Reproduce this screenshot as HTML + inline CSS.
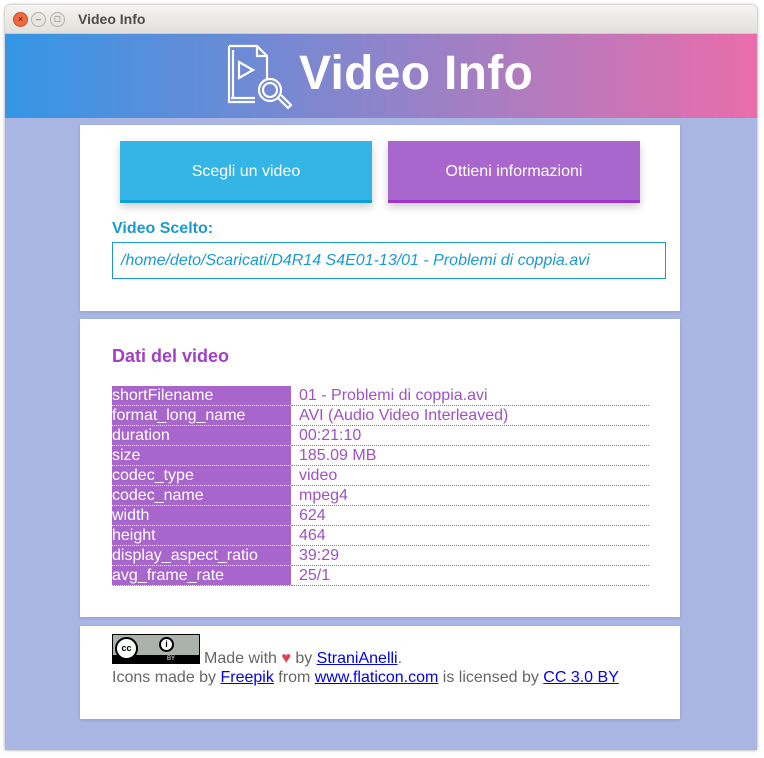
<!DOCTYPE html>
<html><head><style>
body{margin:0;width:764px;height:758px;background:#fff;font-family:"Liberation Sans",sans-serif;position:relative;overflow:hidden}
.win{position:absolute;left:5px;top:5px;width:752px;height:745px;box-shadow:0 0 3px rgba(0,0,0,.4);border-radius:5px 5px 0 0;overflow:hidden;background:#a9b5e3}
.tb{height:28px;background:linear-gradient(#f5f4f2,#e3e0dc);position:relative;border-bottom:1px solid #cfcac4}
.tb .t{position:absolute;left:73px;top:6px;font-weight:bold;font-size:14px;color:#4c4c4c}
.bt{position:absolute;top:7px;width:13px;height:13px;border-radius:50%;border:1px solid #b5b0aa;background:#e8e6e3;font-size:9px;line-height:13px;text-align:center;color:#555}
.hdr{height:84px;background:linear-gradient(90deg,#3496e6,#8e84cb 50%,#ea6dab);position:relative}
.hdr .ti{position:absolute;left:294px;top:12px;color:#fff;font-weight:bold;font-size:48px;letter-spacing:0.3px}
.card{position:absolute;left:75px;width:600px;background:#fff;box-shadow:0 1px 3px rgba(0,0,0,.15)}
.btn{position:absolute;top:16px;width:252px;height:62px;color:#fff;font-size:16px;text-align:center;line-height:62px;box-shadow:0 4px 8px rgba(0,0,0,.2);box-sizing:border-box}
table{border-collapse:collapse;position:absolute;left:32px;top:67px;width:537px;font-size:16px}
td{height:19px;padding:0;line-height:19px;border-bottom:1px dotted #a866cc;white-space:nowrap}
td.k{background:#a866cc;color:#fff;width:179px;border-bottom:1px dotted #fff}
td.v{color:#a050c8;padding-left:8px}
a{color:#00e;text-decoration:underline}
</style></head><body>
<div class="win">
<div class="tb"><div class="bt" style="left:8px;background:#ee6a3a;border-color:#c4502a;color:#602">×</div><div class="bt" style="left:26px">–</div><div class="bt" style="left:45px">□</div><div class="t">Video Info</div></div>
<div class="hdr">
<svg style="position:absolute;left:222px;top:10px" width="68" height="66" viewBox="0 0 68 66" fill="none" stroke="#fff" stroke-width="2.2">
<path d="M2 2h28l10 10v24M2 2v56h26M6 6v48h22M30 2v10h10M6 54h-2"/><path d="M12 18l14 8-14 8z"/><circle cx="43" cy="46" r="11"/><circle cx="43" cy="46" r="7"/><path d="M51 54l10 10 3-3-10-10"/>
</svg>
<div class="ti">Video Info</div></div>
<div class="card" style="top:120px;height:186px">
<div class="btn" style="left:40px;background:#35b5e5;border-bottom:3px solid #0ca0d6">Scegli un video</div>
<div class="btn" style="left:308px;background:#a966cc;border-bottom:3px solid #9a35d0">Ottieni informazioni</div>
<div style="position:absolute;left:32px;top:95px;color:#1a9ad0;font-weight:bold;font-size:16px">Video Scelto:</div>
<div style="position:absolute;left:32px;top:117px;height:37px;border:1px solid #1a9ad0;color:#1a9ad0;font-style:italic;font-size:16px;line-height:35px;padding-left:8px;box-sizing:border-box;width:554px">/home/deto/Scaricati/D4R14 S4E01-13/01 - Problemi di coppia.avi</div>
</div>
<div class="card" style="top:314px;height:298px">
<div style="position:absolute;left:32px;top:27px;color:#a040c8;font-weight:bold;font-size:18px">Dati del video</div>
<table>
<tr><td class="k">shortFilename</td><td class="v">01 - Problemi di coppia.avi</td></tr>
<tr><td class="k">format_long_name</td><td class="v">AVI (Audio Video Interleaved)</td></tr>
<tr><td class="k">duration</td><td class="v">00:21:10</td></tr>
<tr><td class="k">size</td><td class="v">185.09 MB</td></tr>
<tr><td class="k">codec_type</td><td class="v">video</td></tr>
<tr><td class="k">codec_name</td><td class="v">mpeg4</td></tr>
<tr><td class="k">width</td><td class="v">624</td></tr>
<tr><td class="k">height</td><td class="v">464</td></tr>
<tr><td class="k">display_aspect_ratio</td><td class="v">39:29</td></tr>
<tr><td class="k">avg_frame_rate</td><td class="v">25/1</td></tr>
</table></div>
<div class="card" style="top:621px;height:93px;font-size:16px;color:#666">
<div style="position:absolute;left:32px;top:8px;width:88px;height:30px;background:#aab2ab;border:1px solid #000;box-sizing:border-box">
<div style="position:absolute;left:0;right:0;bottom:0;height:8px;background:#000;color:#fff;font-size:6px;line-height:8px;text-align:center;padding-left:30px">BY</div>
<div style="position:absolute;left:2px;top:2px;width:23px;height:23px;border-radius:50%;background:#fff;border:2px solid #000;box-sizing:border-box;font-size:9px;font-weight:bold;line-height:19px;text-align:center;color:#000">cc</div>
<div style="position:absolute;left:46px;top:2px;width:15px;height:15px;border-radius:50%;background:#fff;border:2px solid #000;box-sizing:border-box;font-size:9px;font-weight:bold;line-height:11px;text-align:center;color:#000">i</div></div>
<div style="position:absolute;left:124px;top:24px">Made with <span style="color:#e04050">♥</span> by <a>StraniAnelli</a>.</div>
<div style="position:absolute;left:32px;top:43px">Icons made by <a>Freepik</a> from <a>www.flaticon.com</a> is licensed by <a>CC 3.0 BY</a></div>
</div>
</div>
</body></html>
